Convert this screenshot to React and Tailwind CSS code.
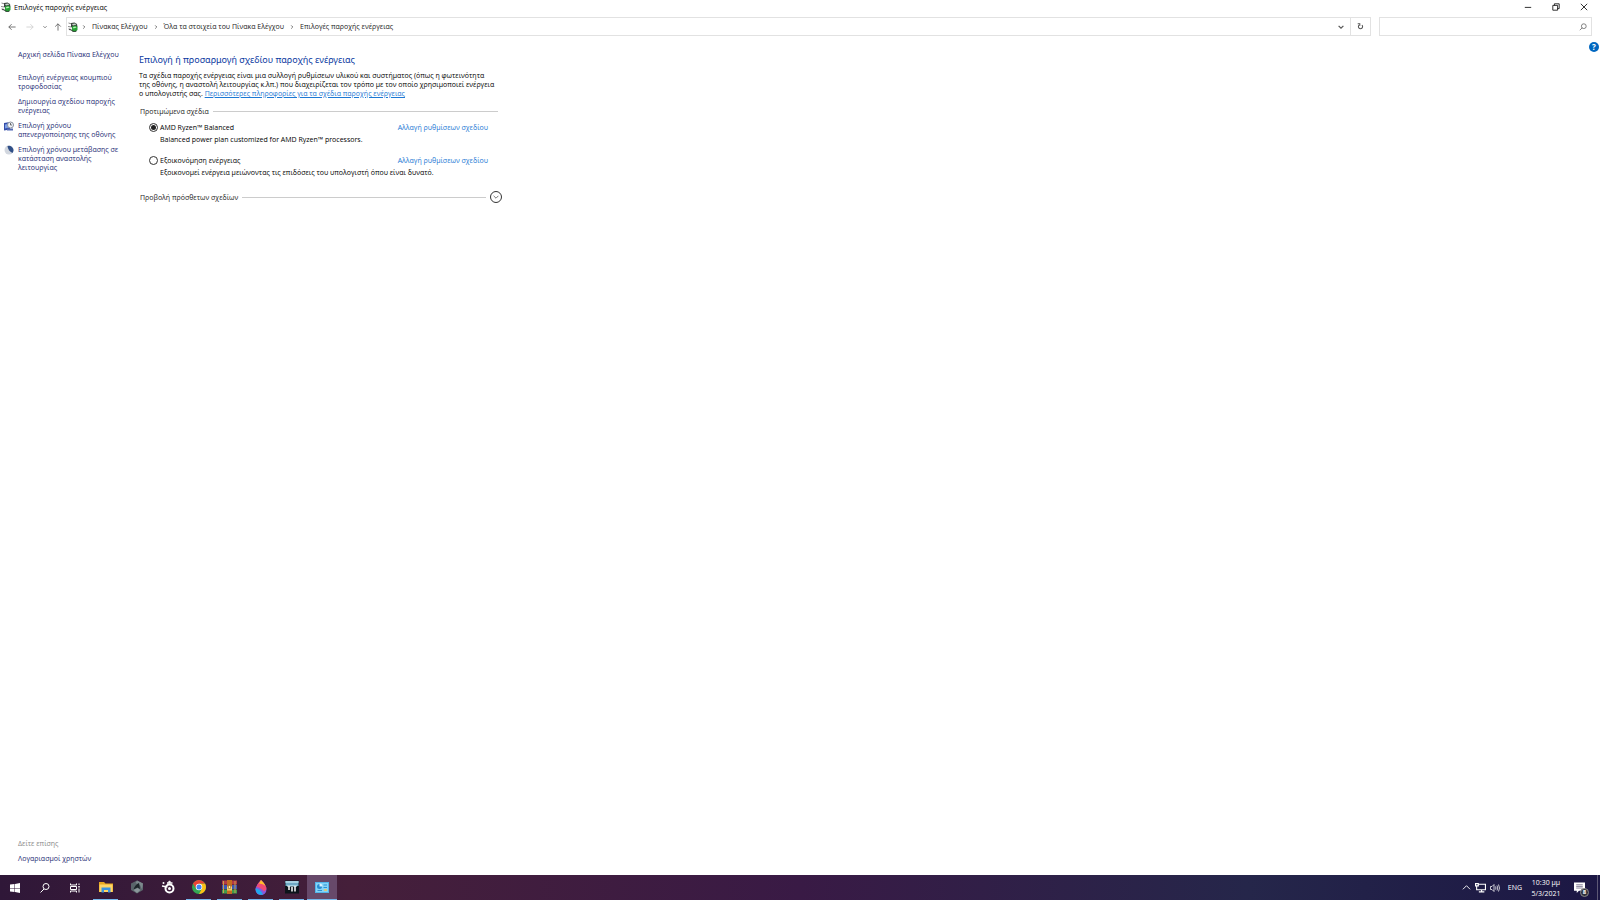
import React, { useState } from 'react'

const crumbs = ['Πίνακας Ελέγχου', 'Όλα τα στοιχεία του Πίνακα Ελέγχου', 'Επιλογές παροχής ενέργειας']

const plans = [
    { id: 'balanced', name: 'AMD Ryzen™ Balanced', info: 'Balanced power plan customized for AMD Ryzen™ processors.' },
    { id: 'saver', name: 'Εξοικονόμηση ενέργειας', info: 'Εξοικονομεί ενέργεια μειώνοντας τις επιδόσεις του υπολογιστή όπου είναι δυνατό.' },
]

const PowerIcon = () => (
    <svg viewBox="0 0 20 20" className="size-[10px] shrink-0">
        <path d="M1 2l7 2M0 9l7 1" stroke="#8b8b8b" strokeWidth="2" />
        <path d="M6 2l7-1 5 3 1 6-6 3-7-3z" fill="#3c463f" />
        <path d="M8 9l7-2 4 3v6l-5 4-6-2z" fill="#25a233" />
        <path d="M8 4l6-1 3 2-7 2z" fill="#c8d4cb" />
        <path d="M10 10l5-1 2 2-6 2z" fill="#b6f0b5" />
        <path d="M1 13l6 1v3l-5-1z" fill="#555" />
        <path d="M7 16q0 3 6 3l4-1" stroke="#2e3a30" strokeWidth="2" fill="none" />
    </svg>
)

const Line = ({ d, className = 'size-[10px]', width = 1 }) => (
    <svg viewBox="0 0 10 10" className={className} fill="none" stroke="currentColor" strokeWidth={width}>
        <path d={d} />
    </svg>
)

const apps = [
    {
        name: 'Explorer', running: true, icon: (
            <svg viewBox="0 0 28 24" className="h-3 w-[14px]">
                <path d="M0 2h10l3 3h15v17H0z" fill="#e9a820" />
                <path d="M1 7h26v15H1z" fill="#ffd667" />
                <path d="M5 13h18v10h-5v-5h-8v5H5z" fill="#3c94df" />
            </svg>
        )
    },
    {
        name: 'Armoury', running: false, icon: (
            <svg viewBox="0 0 28 28" className="size-[14px]">
                <path d="M14 1l12 6v13l-12 7-12-7V7z" fill="#59646a" />
                <path d="M14 1l12 6-2 12-4-9-9-4z" fill="#7c888d" />
                <path d="M18 6q-8 3-11 13l8-4 5 3z" fill="#1d252a" />
                <path d="M7 20l8-4 6 4-7 6z" fill="#8b979b" />
            </svg>
        )
    },
    {
        name: 'SteelSeries', running: false, icon: (
            <svg viewBox="0 0 28 28" className="size-[14px]" fill="none" stroke="#fff">
                <circle cx="17" cy="17" r="8" strokeWidth="4" />
                <circle cx="17" cy="17" r="3" fill="#fff" stroke="none" />
                <path d="M2 12l11 2M12 6h11" strokeWidth="3" />
                <circle cx="17" cy="4" r="2" fill="#fff" />
                <circle cx="5" cy="6" r="2" fill="#fff" stroke="none" />
            </svg>
        )
    },
    {
        name: 'Chrome', running: true, icon: (
            <svg viewBox="0 0 28 28" className="size-[14px]">
                <circle cx="14" cy="14" r="14" fill="#34a853" />
                <path d="M14 7h12.100A14 14 0 0 1 14 28l6-11z" fill="#fbc116" />
                <path d="M2 7q5-7 12-7t12 7H14L8 17z" fill="#ea4335" />
                <circle cx="14" cy="14" r="6.500" fill="#fff" />
                <circle cx="14" cy="14" r="5" fill="#4285f4" />
            </svg>
        )
    },
    {
        name: 'WinRAR', running: true, icon: (
            <svg viewBox="0 0 30 28" className="h-[14px] w-[15px]">
                <path d="M0 1h30v8H0z" fill="#b33a45" />
                <path d="M0 10h30v8H0z" fill="#3d58b4" />
                <path d="M0 19h30v8H0z" fill="#3f9b4a" />
                <path d="M3 2v24M26 2v24" stroke="#c7a04c" strokeWidth="2" />
                <path d="M10 0h10v28H10z" fill="#c36b21" />
                <path d="M10 13h10v8H10z" fill="#f1cc6b" />
                <path d="M13 11h4v6h-4z" fill="#fff0b0" stroke="#78501d" />
            </svg>
        )
    },
    {
        name: 'Paint', running: true, icon: (
            <svg viewBox="0 0 24 30" className="h-[15px] w-3">
                <path d="M12 0Q1 12 1 19a11 11 0 0 0 22 0Q23 11 12 0z" fill="#855bdc" />
                <path d="M12 0Q5 7 3 14q9 1 15 9 5-3 5-7Q21 9 12 0z" fill="#f04a75" />
                <path d="M12 0L8 7q8 0 13 5-2-6-9-12z" fill="#ffbd29" />
                <path d="M1 17q10 1 15 12-14 3-15-12z" fill="#20a9ed" />
            </svg>
        )
    },
    {
        name: 'Monitor', running: true, icon: (
            <svg viewBox="0 0 28 28" className="size-[14px]">
                <path d="M0 1h28v26H0z" fill="#0c141b" />
                <path d="M1 2h26v10H1z" fill="#6fa9c4" />
                <path d="M1 2h26v4H1z" fill="#a6d0e0" />
                <path d="M4 12h20" stroke="#d6f5ff" strokeWidth="2" />
                <path d="M8 12v8M14 14v9M20 12v11" stroke="#fff" strokeWidth="3" />
            </svg>
        )
    },
    {
        name: 'Control Panel', running: true, active: true, icon: (
            <svg viewBox="0 0 28 22" className="h-[11px] w-[14px]">
                <path d="M0 0h28v22H0z" fill="#54b5e9" />
                <path d="M2 2h24v18H2z" fill="#84d4f8" />
                <circle cx="9" cy="9" r="5" fill="#258bd1" />
                <path d="M9 9V3a6 6 0 0 1 6 6z" fill="#d9f2ff" />
                <path d="M17 6h7M17 11h7M5 17h9" stroke="#2f8fd0" strokeWidth="2" />
                <path d="M18 16h6" stroke="#f0c65a" strokeWidth="3" />
            </svg>
        )
    },
]

const Taskbar = () => (
    <footer className="flex h-[25px] shrink-0 justify-between bg-[linear-gradient(90deg,#2f1738,#451f3a_22%,#391a45_50%,#25264a_78%,#1c1744)] text-white">
        <div className="flex">
            <button aria-label="Start" className="flex w-[30px] items-center justify-center">
                <svg viewBox="0 0 20 20" className="size-[10px]" fill="#fff">
                    <path d="M0 3l9-1v8H0zM10 2l10-2v10H10zM0 11h9v7l-9-1zM10 11h10v9l-10-2z" />
                </svg>
            </button>
            <button aria-label="Search" className="flex w-[30px] items-center justify-center">
                <svg viewBox="0 0 20 20" className="size-[10px]" fill="none" stroke="#fff" strokeWidth="2">
                    <circle cx="12" cy="7" r="6" />
                    <path d="M8 12l-7 7" />
                </svg>
            </button>
            <button aria-label="Task view" className="flex w-[30px] items-center justify-center">
                <svg viewBox="0 0 20 20" className="size-[10px]" fill="none" stroke="#fff" strokeWidth="2">
                    <path d="M1 1v3h12V1M1 19v-3h12v3M1 7h12v6H1zM18 1v3M18 11v8" />
                    <path d="M18 6v3" strokeWidth="3" />
                </svg>
            </button>
            {apps.map((app) => (
                <button key={app.name} aria-label={app.name} className={app.active ? 'flex w-[30px] flex-col items-center bg-[#67496a]' : 'flex w-[31px] flex-col items-center'}>
                    <span className="flex flex-1 items-center">{app.icon}</span>
                    <span className={app.active ? 'h-px w-full bg-[#76b9ed]' : app.running ? 'h-px w-[25px] bg-[#76b9ed]' : 'h-px'}></span>
                </button>
            ))}
        </div>
        <div className="flex items-center text-[7px]">
            <button aria-label="Hidden icons" className="mr-1"><Line d="M1 7l4-4 4 4" className="size-[9px]" /></button>
            <svg viewBox="0 0 20 20" className="mr-1 size-[11px]" fill="none" stroke="#fff" strokeWidth="2">
                <path d="M7 4h12v10H6M12 14v4M7 18h10M1 3h5v4H1zM3 7v7h3" />
            </svg>
            <svg viewBox="0 0 20 20" className="mr-2 size-[10px]" fill="none" stroke="#fff" strokeWidth="1.500">
                <path d="M1 7h3l4-4v14l-4-4H1zM11 7q2 3 0 6M14 5q3 5 0 10M17 3q4 7 0 14" />
            </svg>
            <span className="mr-2">ENG</span>
            <div className="w-8 text-center leading-[11px]">
                <div>10:30 μμ</div>
                <div>5/3/2021</div>
            </div>
            <button aria-label="Notifications" className="relative mr-3 ml-3">
                <svg viewBox="0 0 20 20" className="size-[11px]" fill="#fff">
                    <path d="M0 1h20v15H9l-4 4v-4H0z" />
                    <path d="M4 5h12M4 8h12M4 11h12" stroke="#29204b" />
                </svg>
                <span className="absolute -right-1 -bottom-1 flex size-[9px] items-center justify-center rounded-full border border-[#888] bg-[#30303a] text-[6px] font-bold">8</span>
            </button>
            <span className="h-full w-[3px] border-l border-[#5d5875]"></span>
        </div>
    </footer>
)

const App = () => {
    const [plan, setPlan] = useState('balanced')

    return (
        <div className="flex min-h-screen flex-col bg-white font-['Open_Sans',sans-serif] text-[7px] leading-[9px] text-black">

            {/* Title bar */}
            <header className="flex h-[14px] items-center pr-[2px] pl-px">
                <PowerIcon />
                <h1 className="ml-[3px] flex-1">Επιλογές παροχής ενέργειας</h1>
                <button aria-label="Minimize" className="flex w-7 justify-center"><Line d="M1 5.500h8" className="size-2" /></button>
                <button aria-label="Restore" className="flex w-7 justify-center"><Line d="M1 3h6v6H1zM3 3V1h6v6H7" className="size-2" /></button>
                <button aria-label="Close" className="flex w-7 justify-center"><Line d="M1 1l8 8M9 1l-8 8" className="size-2" /></button>
            </header>

            {/* Address bar */}
            <nav className="flex h-[25px] items-center pr-2 text-[#222]">
                <button aria-label="Back" className="ml-2 text-[#555]"><Line d="M9.500 5H1M4.500 1.500L1 5l3.500 3.500" className="size-2" /></button>
                <button aria-label="Forward" className="ml-[10px] text-[#ccc]"><Line d="M.5 5H9M5.500 1.500L9 5 5.500 8.500" className="size-2" /></button>
                <button aria-label="Recent" className="ml-[9px] text-[#666]"><Line d="M1 3l4 4 4-4" className="size-1" width={2} /></button>
                <button aria-label="Up" className="ml-[7px] text-[#555]"><Line d="M5 9.500V1M1.500 4.500L5 1l3.500 3.500" className="size-2" /></button>
                <div className="ml-1 flex h-[19px] flex-1 items-center border border-[#e2e2e2] pl-px">
                    <PowerIcon />
                    {crumbs.map((c) => (
                        <React.Fragment key={c}>
                            <Line d="M3 1l4 4-4 4" className="mx-1 size-1 text-[#555]" width={2} />
                            <a href="#" className="mx-[2px]">{c}</a>
                        </React.Fragment>
                    ))}
                    <button aria-label="History" className="mr-[6px] ml-auto text-[#555]"><Line d="M1 3l4 4 4-4" className="size-[6px]" width={2} /></button>
                    <button aria-label="Refresh" className="flex h-full w-5 items-center justify-center border-l border-[#e2e2e2] text-[#555]">
                        <Line d="M3 3a3 3 0 1 0 4 0M4 4V1H1" className="size-[7px]" width={1.500} />
                    </button>
                </div>
                <label className="ml-2 flex h-[19px] w-[213px] items-center border border-[#e2e2e2] pr-1">
                    <input type="text" aria-label="Search" className="min-w-0 flex-1 outline-none" />
                    <svg viewBox="0 0 10 10" className="size-2" fill="none" stroke="#666"><circle cx="6" cy="4" r="3" /><path d="M4 6L1 9" /></svg>
                </label>
            </nav>

            <div className="flex flex-1">
                {/* Task links */}
                <aside className="flex w-[139px] shrink-0 flex-col pt-[11px] pb-3 pl-1 text-[#1d2a74]">
                    <a href="#" className="mb-[14px] ml-[14px]">Αρχική σελίδα Πίνακα Ελέγχου</a>
                    <div className="flex flex-col gap-[6px]">
                        <a href="#" className="ml-[14px]">Επιλογή ενέργειας κουμπιού<br />τροφοδοσίας</a>
                        <a href="#" className="ml-[14px]">Δημιουργία σχεδίου παροχής<br />ενέργειας</a>
                        <a href="#" className="flex gap-1">
                            <svg viewBox="0 0 20 20" className="size-[10px]">
                                <path d="M0 4l12-2v15l-12 2z" fill="#344da8" />
                                <path d="M2 7l8-2v8l-8 2z" fill="#7d9fe5" />
                                <path d="M6 15h12v4H6z" fill="#5369b5" />
                                <circle cx="13" cy="8" r="6" fill="#eef1f7" stroke="#8a929e" strokeWidth="2" />
                                <path d="M13 4v4h3" stroke="#444" fill="none" strokeWidth="1.500" />
                            </svg>
                            <span>Επιλογή χρόνου<br />απενεργοποίησης της οθόνης</span>
                        </a>
                        <a href="#" className="flex gap-1">
                            <svg viewBox="0 0 20 20" className="size-[10px]">
                                <circle cx="10" cy="10" r="9" fill="#d2d7df" />
                                <path d="M7 2a9 9 0 0 1 10 14Q8 12 7 2z" fill="#304f87" />
                            </svg>
                            <span>Επιλογή χρόνου μετάβασης σε<br />κατάσταση αναστολής<br />λειτουργίας</span>
                        </a>
                    </div>
                    <p className="mt-auto mb-[6px] ml-[14px] text-[#888]">Δείτε επίσης</p>
                    <a href="#" className="ml-[14px]">Λογαριασμοί χρηστών</a>
                </aside>

                {/* Power plans */}
                <main className="w-[363px] pt-[14px]">
                    <h2 className="font-['Noto_Sans',sans-serif] text-[9px] leading-[14px] text-[#0b399f]">Επιλογή ή προσαρμογή σχεδίου παροχής ενέργειας</h2>
                    <p className="mt-1 whitespace-nowrap">
                        Τα σχέδια παροχής ενέργειας είναι μια συλλογή ρυθμίσεων υλικού και συστήματος (όπως η φωτεινότητα<br />
                        της οθόνης, η αναστολή λειτουργίας κ.λπ.) που διαχειρίζεται τον τρόπο με τον οποίο χρησιμοποιεί ενέργεια<br />
                        ο υπολογιστής σας. <a href="#" className="text-[#1c78d4] underline">Περισσότερες πληροφορίες για τα σχέδια παροχής ενέργειας</a>
                    </p>
                    <h3 className="mt-[9px] mr-1 flex items-center gap-1 pl-px text-[#222]">
                        Προτιμώμενα σχέδια<span className="h-px flex-1 bg-[#ccc]"></span>
                    </h3>
                    <div className="mt-[7px] flex flex-col gap-3">
                        {plans.map((p) => (
                            <div key={p.id} className="pr-[14px] pl-[10px]">
                                <div className="flex items-center justify-between">
                                    <label className="flex items-center gap-[2px]">
                                        <input
                                            type="radio"
                                            name="plan"
                                            checked={plan === p.id}
                                            onChange={() => setPlan(p.id)}
                                            className="size-[9px] appearance-none rounded-full border border-[#333] bg-clip-content p-px checked:bg-[#222]"
                                        />
                                        {p.name}
                                    </label>
                                    <a href="#" className="text-[#1c78d4]">Αλλαγή ρυθμίσεων σχεδίου</a>
                                </div>
                                <p className="mt-[3px] pl-[11px]">{p.info}</p>
                            </div>
                        ))}
                    </div>
                    <div className="mt-[14px] flex items-center pl-px text-[#222]">
                        <span>Προβολή πρόσθετων σχεδίων</span>
                        <span className="mx-1 h-px flex-1 bg-[#ccc]"></span>
                        <button aria-label="Show more" className="flex size-3 items-center justify-center rounded-full border border-[#333]">
                            <Line d="M1 3l4 4 4-4" className="size-[6px]" />
                        </button>
                    </div>
                </main>
                <button aria-label="Help" className="mt-[3px] mr-px ml-auto size-[10px] rounded-full bg-[#0067c0] text-center text-[8px] leading-[10px] font-bold text-white">?</button>
            </div>

            <Taskbar />
        </div>
    )
}

export default App
